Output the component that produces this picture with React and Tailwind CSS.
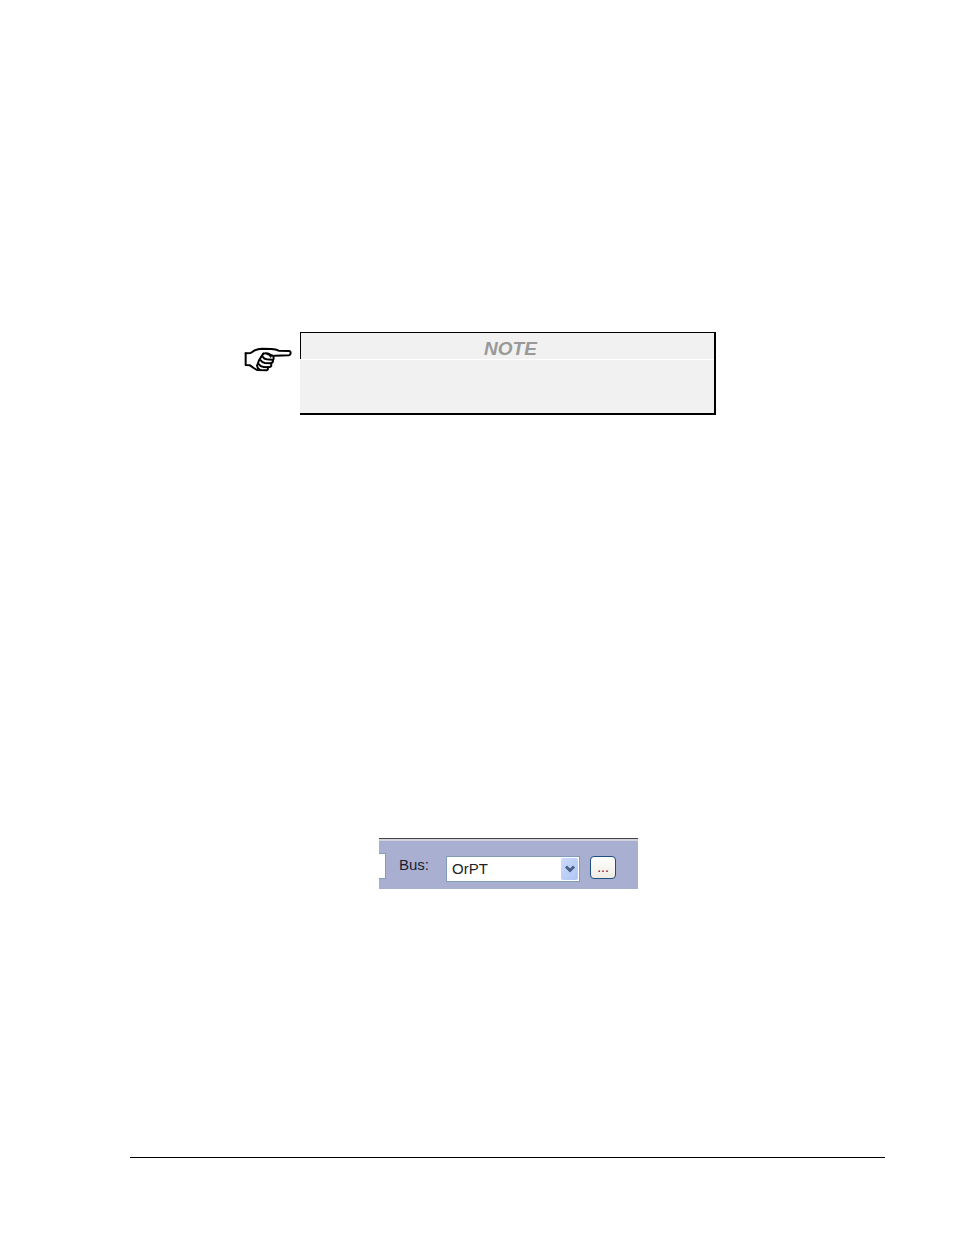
import React, { useState } from 'react';

function PointingHand() {
  return (
    <svg viewBox="0 0 192 132" className="w-16 h-11 mt-1 shrink-0" fill="none" stroke="#000" strokeWidth="6" strokeLinejoin="round" strokeLinecap="round" aria-hidden="true">
      <path d="M29 52 L44 51 L56 43 Q66 38 78 38 L106 39 Q120 40 128 44 L160 45 Q164 46 164 51 Q164 57 159 58 L116 59" />
      <path d="M29 52 L29 87 L42 88 L53 96 L63 102 L92 103 Q98 101 95 94 Q106 94 106 88 Q106 84 104 82 Q112 80 111 72 Q115 66 111 59 L94 54" />
      <path d="M82 53 Q92 49 101 55 L104 62" />
      <path d="M82 53 L74 65 Q68 73 66 82 L63 89 Q64 97 71 101" />
      <path d="M81 63 Q84 69 92 70 L108 71" />
      <path d="M74 73 Q78 80 87 81 L104 82" />
      <path d="M68 84 Q73 92 83 93 L95 94" />
    </svg>
  );
}

function Note() {
  return (
    <div className="flex justify-center items-start">
      <PointingHand />
      <section className="w-[416px] bg-[#f1f1f1] border-t border-r-2 border-b-2 border-black">
        <h2 className="h-[26px] pt-1 pl-1.5 border-l border-black text-center text-[19px] leading-6 font-bold italic text-[#999]">
          NOTE
        </h2>
        <div className="h-[54px] border-t border-white" />
      </section>
      <div className="w-16" />
    </div>
  );
}

function BusPicker() {
  const [bus, setBus] = useState('OrPT');

  return (
    <div className="flex justify-center pl-px">
      <div className="w-[259px] h-[51px] flex items-start bg-[#a9afd0] border-t border-[#444] text-[15px] text-[#1c1c30]">
        <div className="w-full flex items-start border-t-2 border-[#d0d2dc] pt-3">
          <input aria-label="Name" className="w-[7px] h-[26px] bg-white border border-l-0 border-[#7f9db9]" />
          <label htmlFor="bus" className="w-[60px] pl-[13px] leading-6">
            Bus:
          </label>
          <div className="relative mt-[3px]">
            <select
              id="bus"
              value={bus}
              onChange={(e) => setBus(e.target.value)}
              className="block appearance-none w-[134px] h-[26px] pl-[5px] bg-white border border-[#7f9db9] text-[15px] text-[#222]"
            >
              <option>OrPT</option>
            </select>
            <span className="absolute right-0.5 top-0.5 w-[17px] h-[22px] rounded-xs bg-linear-to-br from-[#cbdafd] to-[#afc5f4] flex items-center justify-center pointer-events-none">
              <svg viewBox="0 0 10 8" className="w-2.5 h-2" fill="none" stroke="#4a5e83" strokeWidth="2.8">
                <path d="M1 1.5 L5 5.5 L9 1.5" />
              </svg>
            </span>
          </div>
          <button
            type="button"
            aria-label="Browse buses"
            className="w-[26px] h-[23px] ml-2.5 mt-[3px] pb-0.5 rounded border border-[#1f4f80] bg-linear-to-b from-white to-[#eeece2] text-sm leading-4 text-[#502050]"
          >
            ...
          </button>
        </div>
      </div>
    </div>
  );
}

function App() {
  return (
    <div className="min-h-screen bg-white pl-[130px] pr-[68px] font-['Liberation_Sans',Arial,sans-serif]">
      <main className="flex flex-col gap-[423px] pt-[332px] pb-[268px]">
        <Note />
        <BusPicker />
      </main>
      <hr className="mr-px border-t border-black" />
    </div>
  );
}

export default App;
